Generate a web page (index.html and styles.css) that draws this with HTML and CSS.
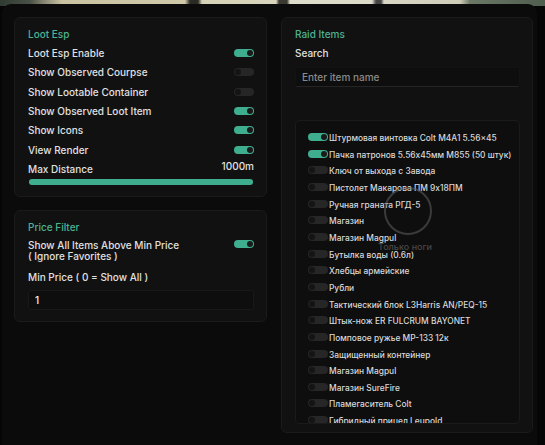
FILE: index.html
```html
<!DOCTYPE html>
<html lang="ru">
<head>
  <meta charset="UTF-8">
  <meta name="viewport" content="width=device-width, initial-scale=1.0">
  <title>Loot Menu</title>
  <link rel="stylesheet" href="styles.css">
</head>
<body>
  <div class="scene"></div>

  <div class="window">
    <div class="column">
      <section class="panel loot">
        <div class="row title">Loot Esp</div>
        <div class="row"><span>Loot Esp Enable</span><span class="toggle on"></span></div>
        <div class="row"><span>Show Observed Courpse</span><span class="toggle"></span></div>
        <div class="row"><span>Show Lootable Container</span><span class="toggle"></span></div>
        <div class="row"><span>Show Observed Loot Item</span><span class="toggle on"></span></div>
        <div class="row"><span>Show Icons</span><span class="toggle on"></span></div>
        <div class="row"><span>View Render</span><span class="toggle on"></span></div>
        <div class="row"><span>Max Distance</span><span class="range-value">1000m</span></div>
        <div class="range"><div class="range-fill" style="width: 100%"></div></div>
      </section>

      <section class="panel price">
        <div class="row title">Price Filter</div>
        <div class="option">
          <span>Show All Items Above Min Price<br>( Ignore Favorites )</span>
          <span class="toggle on"></span>
        </div>
        <div class="label">Min Price ( 0 = Show All )</div>
        <input class="field" type="text" value="1">
      </section>
    </div>

    <section class="panel raid">
      <div class="row title">Raid Items</div>
      <div class="row"><span>Search</span></div>
      <input class="field search" type="text" placeholder="Enter item name">

      <div class="items">
        <div class="item"><span class="toggle on"></span>Штурмовая винтовка Colt M4A1 5.56x45</div>
        <div class="item"><span class="toggle on"></span>Пачка патронов 5.56x45мм M855 (50 штук)</div>
        <div class="item"><span class="toggle"></span>Ключ от выхода с Завода</div>
        <div class="item"><span class="toggle"></span>Пистолет Макарова ПМ 9x18ПМ</div>
        <div class="item"><span class="toggle"></span>Ручная граната РГД-5</div>
        <div class="item"><span class="toggle"></span>Магазин</div>
        <div class="item"><span class="toggle"></span>Магазин Magpul</div>
        <div class="item"><span class="toggle"></span>Бутылка воды (0.6л)</div>
        <div class="item"><span class="toggle"></span>Хлебцы армейские</div>
        <div class="item"><span class="toggle"></span>Рубли</div>
        <div class="item"><span class="toggle"></span>Тактический блок L3Harris AN/PEQ-15</div>
        <div class="item"><span class="toggle"></span>Штык-нож ER FULCRUM BAYONET</div>
        <div class="item"><span class="toggle"></span>Помповое ружье MP-133 12к</div>
        <div class="item"><span class="toggle"></span>Защищенный контейнер</div>
        <div class="item"><span class="toggle"></span>Магазин Magpul</div>
        <div class="item"><span class="toggle"></span>Магазин SureFire</div>
        <div class="item"><span class="toggle"></span>Пламегаситель Colt</div>
        <div class="item"><span class="toggle"></span>Гибридный прицел Leupold</div>
      </div>
    </section>
  </div>

  <!-- game HUD showing through the menu -->
  <div class="crosshair"></div>
  <div class="hud-note">Только ноги</div>
</body>
</html>
```

FILE: styles.css
```css
body {
  margin: 0;
  height: 445px;
  overflow: hidden;
  position: relative;
  background-color: #060606;
  font-family: Inter, "Noto Sans", sans-serif;
  font-size: 10px;
  font-weight: 500;
  color: #e0e0e0;
}

.scene {
  height: 6px;
  background: linear-gradient(90deg,
    #2f3a31 0, #4a5246 30px, #8c8a76 45px, #c9c3a2 62px, #cfc9aa 185px,
    #2a2b25 190px, #2a2b25 198px, #d6d2b8 202px, #d9d5bc 276px,
    #3a3a30 279px, #3a3a30 287px, #dedccb 290px, #dcdac8 372px,
    #444 376px, #444 381px, #d8d6c4 384px, #cfcdb8 460px,
    #6b7866 470px, #4f5e4e 545px);
}

.window {
  display: flex;
  gap: 14px;
  box-sizing: border-box;
  height: 441px;
  margin: -2px 8px 0 2px;
  padding: 13px 4px 0 12px;
  background-color: #0b0b0b;
  border-radius: 9px 9px 0 0;
}

.column {
  width: 253px;
  display: flex;
  flex-direction: column;
  gap: 13px;
}

.panel {
  box-sizing: border-box;
  background-color: #111;
  border: 1px solid #1b1b1b;
  border-radius: 6px;
  padding: 6px 12px 0 13px;
}

.loot {
  height: 180px;
}

.price {
  height: 112px;
}

.raid {
  width: 252px;
  height: 416px;
}

.row {
  height: 19.33px;
  display: flex;
  align-items: center;
  justify-content: space-between;
}

.title {
  color: #4cb393;
}

.range-value {
  margin-top: -6px;
}

.range {
  height: 6px;
  margin: 0 1px;
  background-color: #222;
  border-radius: 3px;
}

.range-fill {
  height: 100%;
  background-color: #3fae8f;
  border-radius: 3px;
}

.toggle {
  flex: none;
  position: relative;
  width: 20px;
  height: 8px;
  border-radius: 4px;
  background-color: #262626;
}

.toggle::after {
  content: "";
  position: absolute;
  top: 1px;
  left: 1px;
  width: 6px;
  height: 6px;
  border-radius: 50%;
  background-color: #141414;
}

.toggle.on {
  background-color: #3fae8f;
}

.toggle.on::after {
  left: auto;
  right: 1px;
  background-color: #1a1a1a;
}

.option {
  display: flex;
  justify-content: space-between;
  align-items: flex-start;
  margin-top: 4px;
  line-height: 11px;
}

.label {
  margin-top: 10px;
  line-height: 11px;
}

.field {
  display: block;
  box-sizing: border-box;
  width: 100%;
  height: 20px;
  margin-top: 7px;
  padding: 0 6px;
  background-color: #0e0e0e;
  border: 1px solid #191919;
  border-radius: 3px;
  color: #f0f0f0;
  font: inherit;
  outline: none;
}

.search {
  margin-top: 4px;
  border-color: #131313;
  border-bottom-color: #252525;
}

.search::placeholder {
  color: #8a8a8a;
}

.items {
  box-sizing: border-box;
  height: 304px;
  margin-top: 33px;
  padding: 9px 0 0 12px;
  overflow: hidden;
  background-color: #0e0e0e;
  border: 1px solid #1a1a1a;
  border-radius: 4px;
}

.item {
  height: 16.67px;
  display: flex;
  align-items: center;
  color: #d9d9d9;
  font-size: 8.4px;
  white-space: nowrap;
}

.item .toggle {
  margin: 0 1px 2px 0;
}

.crosshair {
  position: absolute;
  left: 384px;
  top: 187px;
  width: 44px;
  height: 44px;
  border: 2px solid rgba(95, 95, 95, 0.55);
  border-radius: 50%;
}

.hud-note {
  position: absolute;
  left: 378px;
  top: 241px;
  font-size: 9px;
  color: rgba(110, 110, 110, 0.6);
}
```
